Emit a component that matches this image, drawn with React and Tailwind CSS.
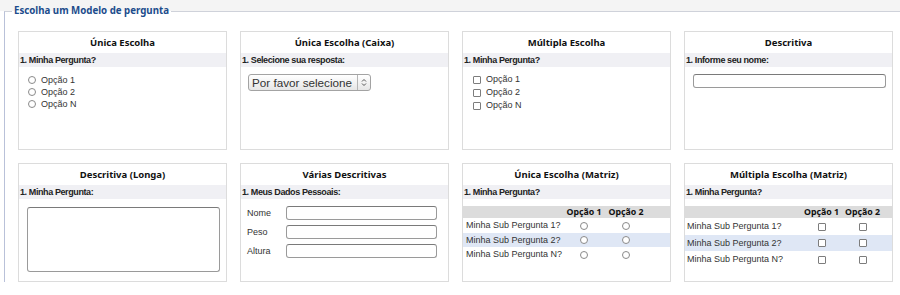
import React from "react";

const TITLE = "font-['Noto_Sans',sans-serif] font-bold text-[9.5px] text-[#111]";
const HEAD = "font-['Noto_Sans',sans-serif] font-bold text-[8.8px] text-[#111]";
const BAR = "font-['Liberation_Sans',Arial,sans-serif] font-bold text-[9px] tracking-[-0.4px] text-[#222]";
const TXT = "font-['Liberation_Sans',Arial,sans-serif] text-[9px] text-[#333]";

const Radio = () => (
  <span className="block w-[8px] h-[8px] rounded-full border border-[#8a8a8a] bg-white shrink-0" />
);

const Check = () => (
  <span className="block w-[8px] h-[8px] rounded-[1px] border border-[#7d7d7d] bg-white shrink-0" />
);

const Card = ({ title, question, children }) => (
  <div className="h-[119px] border border-[#dcdcdc] bg-white flex flex-col">
    <div className={`h-[21px] flex items-center justify-center leading-none ${TITLE}`}>{title}</div>
    <div className={`h-[14px] flex items-center pl-[1px] bg-[#f0f0f4] leading-none ${BAR}`}>{question}</div>
    {children}
  </div>
);

const TextBox = ({ className }) => (
  <div className={`border border-[#9a9a9a] border-t-[#7a7a7a] rounded-[3px] bg-white ${className}`} />
);

const Matrix = ({ Mark, cols, rowH, pl, head }) => (
  <div className="mt-[7px] flex flex-col">
    <div className={`grid ${cols} h-[12px] items-center bg-[#dcdcdc] ${head}`}>
      <span />
      <span className={`text-center leading-none ${HEAD}`}>Opção 1</span>
      <span className={`text-center leading-none ${HEAD}`}>Opção 2</span>
    </div>
    {["1?", "2?", "N?"].map((n, i) => (
      <div
        key={n}
        className={`grid ${cols} ${head} items-center ${rowH[i]} ${i === 1 ? "bg-[#dfe7f5]" : ""}`}
      >
        <span className={`${pl} leading-none ${TXT}`}>Minha Sub Pergunta {n}</span>
        <span className="flex justify-center"><Mark /></span>
        <span className="flex justify-center"><Mark /></span>
      </div>
    ))}
  </div>
);

export default function App() {
  return (
    <div className="w-[900px] h-[295px] overflow-hidden bg-[linear-gradient(to_bottom,#f4f4f4_11px,#ffffff_11px)]">
      <fieldset className="ml-[4px] mt-[5px] p-0 min-w-0 border-0 border-l border-t border-l-[#b9c1d9] border-t-[#cfd2da]">
        <legend className="ml-[7px] px-[2px] font-['Noto_Sans',sans-serif] font-bold text-[9.7px] leading-[12px] text-[#1c4c8c]">
          Escolha um Modelo de pergunta
        </legend>
        <div className="grid grid-cols-[repeat(4,209px)] gap-x-[13px] gap-y-[13px] pl-[13px] pt-[14px]">
          <Card title="Única Escolha" question="1. Minha Pergunta?">
            <div className="pt-[7px] pl-[9px] flex flex-col">
              {["Opção 1", "Opção 2", "Opção N"].map((o) => (
                <div key={o} className="h-[12px] flex items-center gap-[5px]">
                  <Radio />
                  <span className={`leading-none ${TXT}`}>{o}</span>
                </div>
              ))}
            </div>
          </Card>

          <Card title="Única Escolha (Caixa)" question="1. Selecione sua resposta:">
            <div className="mt-[7px] ml-[7px] w-[123px] h-[17px] flex items-center border border-[#a3a3a3] rounded-[3px] bg-[linear-gradient(to_bottom,#ffffff,#e6e6e6)]">
              <span className="flex-1 pl-[3px] font-['Liberation_Sans',Arial,sans-serif] text-[11.7px] leading-none text-[#333] whitespace-nowrap overflow-hidden">
                Por favor selecione
              </span>
              <span className="h-full border-l border-[#b5b5b5] w-[13px] flex items-center justify-center">
                <svg width="6" height="9" viewBox="0 0 6 9" fill="none" stroke="#555" strokeWidth="1">
                  <path d="M1 3.5 L3 1.5 L5 3.5" />
                  <path d="M1 5.5 L3 7.5 L5 5.5" />
                </svg>
              </span>
            </div>
          </Card>

          <Card title="Múltipla Escolha" question="1. Minha Pergunta?">
            <div className="pt-[6px] pl-[10px] flex flex-col">
              {["Opção 1", "Opção 2", "Opção N"].map((o) => (
                <div key={o} className="h-[13px] flex items-center gap-[5px]">
                  <Check />
                  <span className={`leading-none ${TXT}`}>{o}</span>
                </div>
              ))}
            </div>
          </Card>

          <Card title="Descritiva" question="1. Informe seu nome:">
            <TextBox className="mt-[7px] ml-[8px] w-[193px] h-[14px]" />
          </Card>

          <Card title="Descritiva (Longa)" question="1. Minha Pergunta:">
            <TextBox className="mt-[8px] ml-[8px] w-[193px] h-[65px]" />
          </Card>

          <Card title="Várias Descritivas" question="1. Meus Dados Pessoais:">
            <div className="mt-[7px] pl-[6px] flex flex-col gap-[5px]">
              {["Nome", "Peso", "Altura"].map((l) => (
                <div key={l} className="flex items-center">
                  <span className={`w-[39px] leading-none ${TXT}`}>{l}</span>
                  <TextBox className="w-[151px] h-[14px]" />
                </div>
              ))}
            </div>
          </Card>

          <Card title="Única Escolha (Matriz)" question="1. Minha Pergunta?">
            <Matrix
              Mark={Radio}
              cols="grid-cols-[1fr_42px_42px]"
              head="pr-[23px]"
              pl="pl-[3px]"
              rowH={["h-[15px]", "h-[14px]", "h-[15px]"]}
            />
          </Card>

          <Card title="Múltipla Escolha (Matriz)" question="1. Minha Pergunta?">
            <Matrix
              Mark={Check}
              cols="grid-cols-[1fr_41px_41px]"
              head="pr-[9px]"
              pl="pl-[2px]"
              rowH={["h-[17px]", "h-[16px]", "h-[17px]"]}
            />
          </Card>
        </div>
      </fieldset>
    </div>
  );
}
